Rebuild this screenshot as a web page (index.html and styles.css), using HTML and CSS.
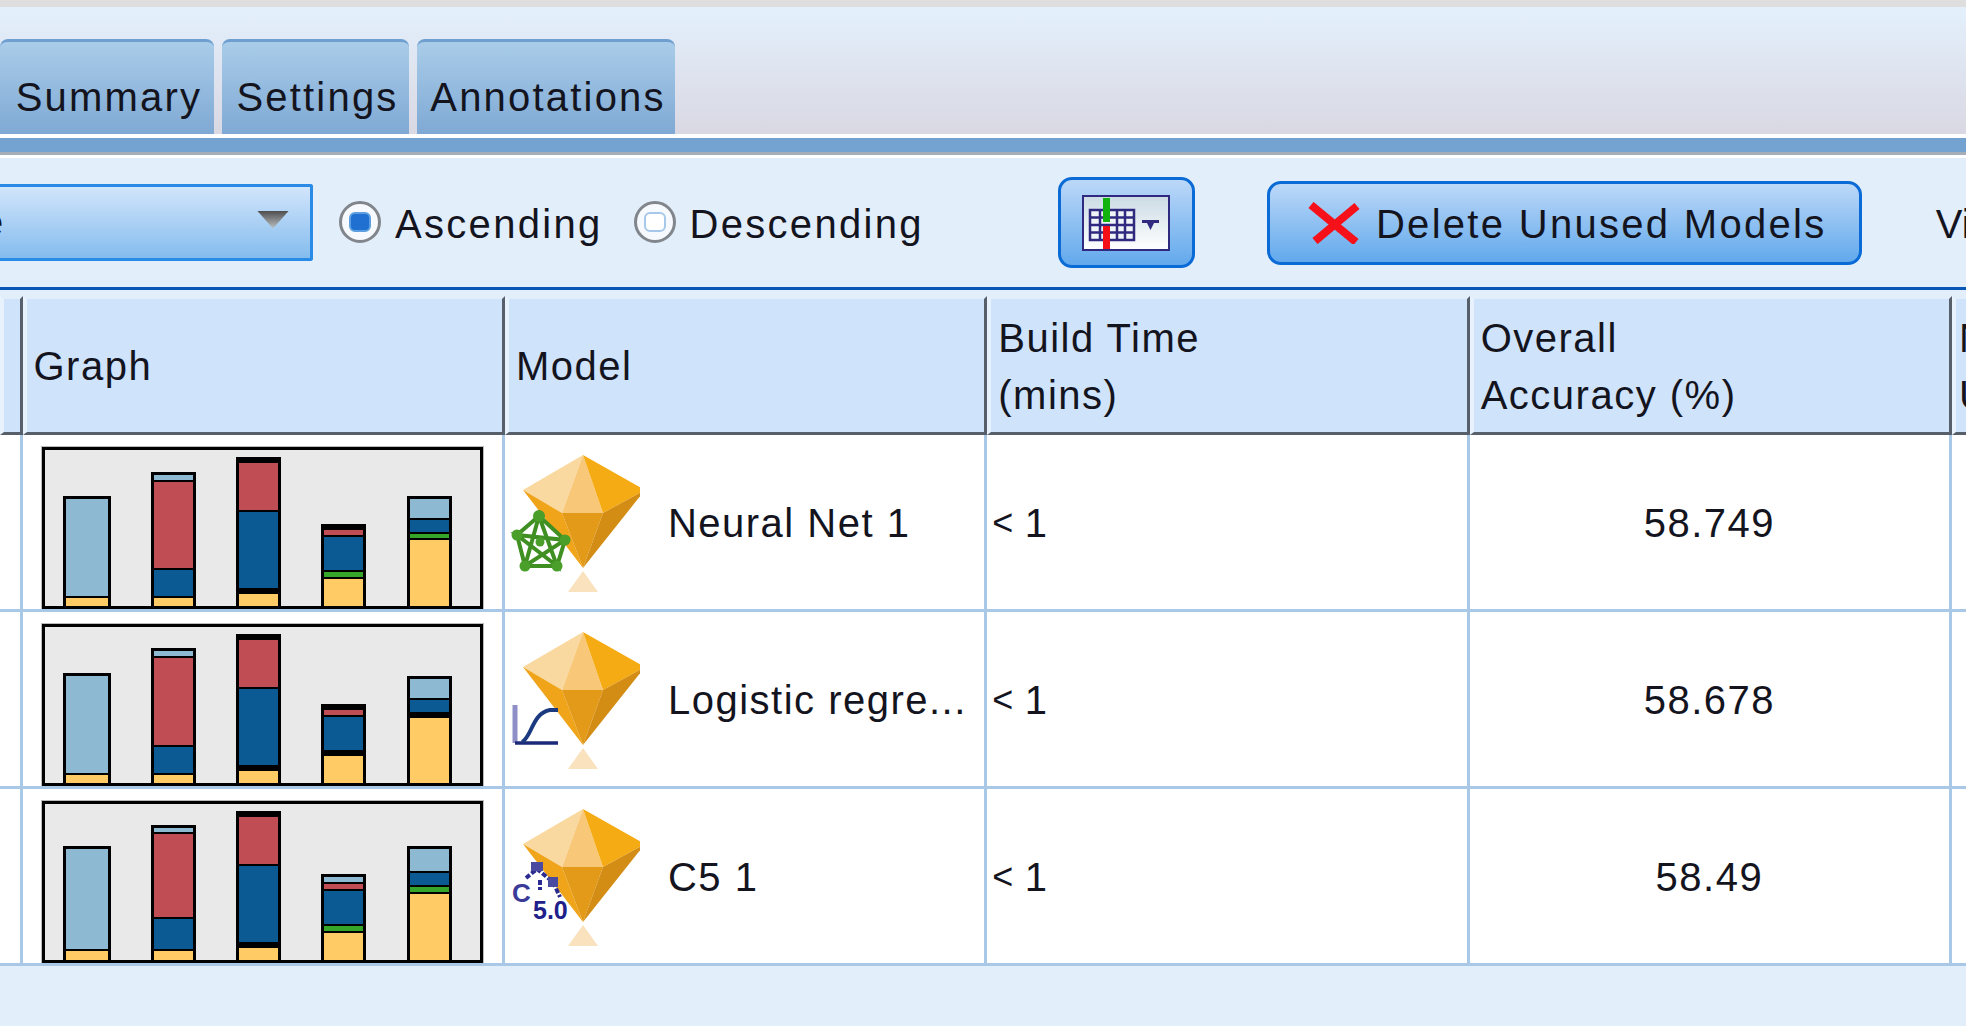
FILE: index.html
```html
<!DOCTYPE html>
<html lang="en">
<head>
  <meta charset="UTF-8" />
  <title>Model nugget</title>
  <link rel="stylesheet" href="styles.css">
</head>
<body>
  <svg class="defs" width="0" height="0">
    <symbol id="gem" viewBox="0 0 200 200" overflow="visible">
      <polygon points="93,27 33,62 72,85" fill="#f9d9a0"/>
      <polygon points="93,27 72,85 113,85" fill="#f8c878"/>
      <polygon points="93,27 113,85 155,62" fill="#f5ab14"/>
      <polygon points="33,62 72,85 93,140" fill="#f0a41a"/>
      <polygon points="72,85 113,85 93,140" fill="#e39a18"/>
      <polygon points="113,85 155,62 93,140" fill="#d48d14"/>
      <polygon points="93,143 78,164 108,164" fill="#f9e2bd"/>
    </symbol>
  </svg>

  <div class="tab-area">
    <div class="tab tab-summary">Summary</div>
    <div class="tab tab-settings">Settings</div>
    <div class="tab tab-annotations">Annotations</div>
  </div>
  <div class="band"></div>

  <div class="toolbar">
    <div class="combo">
      <span class="combo-text">e</span>
      <span class="combo-arrow"></span>
    </div>
    <label class="radio radio-asc"><span class="radio-dot on"></span><span class="radio-text">Ascending</span></label>
    <label class="radio radio-desc"><span class="radio-dot"></span><span class="radio-text">Descending</span></label>
    <div class="btn btn-table">
      <svg width="88" height="56" viewBox="0 0 88 56">
        <defs>
          <linearGradient id="tbl" x1="0" y1="0" x2="0" y2="1">
            <stop offset="0" stop-color="#cbdbe4"/>
            <stop offset="1" stop-color="#ffffff"/>
          </linearGradient>
        </defs>
        <rect x="1" y="1" width="86" height="54" fill="url(#tbl)" stroke="#2f2a7f" stroke-width="2"/>
        <rect x="8" y="15" width="44" height="30" fill="#f0f4f8" stroke="#2f2a7f" stroke-width="2.500"/>
        <path d="M8 22.500H52M8 30H52M8 37.500H52M18 15V45M35 15V45M43 15V45" stroke="#2f2a7f" stroke-width="2.500"/>
        <rect x="21" y="3" width="7" height="24" fill="#12b30e"/>
        <rect x="21" y="31" width="7" height="23" fill="#f40f17"/>
        <path d="M60 25H77V28H72L68.500 35L65 28H60Z" fill="#2f2a7f"/>
      </svg>
    </div>
    <div class="btn btn-delete">
      <svg width="54" height="42" viewBox="0 0 54 42">
        <path d="M3 3L48 40M49 4L7 39" stroke="#f5101a" stroke-width="8" fill="none"/>
      </svg>
      <span class="btn-text">Delete Unused Models</span>
    </div>
    <span class="view-label">View:</span>
  </div>
  <div class="table-line"></div>

  <div class="grid">
    <div class="th"></div>
    <div class="th">Graph</div>
    <div class="th">Model</div>
    <div class="th">Build Time<br>(mins)</div>
    <div class="th">Overall<br>Accuracy (%)</div>
    <div class="th th-last">No. Fields<br>Used</div>

    <!-- row 1 -->
    <div class="td"></div>
    <div class="td td-graph">
      <div class="chart">
        <div class="bar bar-wide"><i class="lb" style="height:97px"></i><i class="ye" style="height:8px"></i></div>
        <div class="bar"><i class="lb" style="height:5px"></i><i class="re" style="height:86px"></i><i class="bl" style="height:26px"></i><i class="ye" style="height:8px"></i></div>
        <div class="bar"><i style="height:1px"></i><i class="re" style="height:47px"></i><i class="bl" style="height:76px"></i><i style="height:2px"></i><i class="ye" style="height:12px"></i></div>
        <div class="bar"><i style="height:1px"></i><i class="re" style="height:5px"></i><i class="bl" style="height:33px"></i><i class="gr" style="height:5px"></i><i class="ye" style="height:27px"></i></div>
        <div class="bar"><i class="lb" style="height:19px"></i><i class="bl" style="height:12px"></i><i class="gr" style="height:4px"></i><i class="ye" style="height:66px"></i></div>
      </div>
    </div>
    <div class="td td-model">
      <svg class="model-icon" width="135" height="150" viewBox="15 19 135 150">
        <use href="#gem" width="200" height="200"/>
        <path d="M49 88L35 138L75 112L27 107L67 138Z M49 88L27 107L35 138H67L75 112Z" fill="#fff" fill-opacity=".7" fill-rule="evenodd" stroke="#3f8f22" stroke-width="4"/>
        <g fill="#4a9e2a"><circle cx="49" cy="88" r="6"/><circle cx="27" cy="107" r="5.500"/><circle cx="75" cy="112" r="5.500"/><circle cx="35" cy="138" r="5.500"/><circle cx="67" cy="138" r="5.500"/><circle cx="50" cy="114" r="4.500"/></g>
      </svg>
      <span class="model-name">Neural Net 1</span>
    </div>
    <div class="td td-time"><small>&lt;</small> 1</div>
    <div class="td td-num">58.749</div>
    <div class="td td-last"></div>

    <!-- row 2 -->
    <div class="td"></div>
    <div class="td td-graph">
      <div class="chart">
        <div class="bar bar-wide"><i class="lb" style="height:97px"></i><i class="ye" style="height:8px"></i></div>
        <div class="bar"><i class="lb" style="height:5px"></i><i class="re" style="height:87px"></i><i class="bl" style="height:26px"></i><i class="ye" style="height:8px"></i></div>
        <div class="bar"><i style="height:1px"></i><i class="re" style="height:47px"></i><i class="bl" style="height:76px"></i><i style="height:2px"></i><i class="ye" style="height:12px"></i></div>
        <div class="bar"><i style="height:1px"></i><i class="re" style="height:5px"></i><i class="bl" style="height:33px"></i><i style="height:2px"></i><i class="ye" style="height:27px"></i></div>
        <div class="bar"><i class="lb" style="height:19px"></i><i class="bl" style="height:12px"></i><i style="height:2px"></i><i class="ye" style="height:65px"></i></div>
      </div>
    </div>
    <div class="td td-model">
      <svg class="model-icon" width="135" height="150" viewBox="15 19 135 150">
        <use href="#gem" width="200" height="200"/>
        <path d="M25 100V138" stroke="#8f8fc8" stroke-width="5"/>
        <path d="M25 138H68" stroke="#1b2a78" stroke-width="3.500"/>
        <path d="M32 137C42 132 42 108 60 105H68" stroke="#1b3a80" stroke-width="4" fill="none"/>
      </svg>
      <span class="model-name">Logistic regre...</span>
    </div>
    <div class="td td-time"><small>&lt;</small> 1</div>
    <div class="td td-num">58.678</div>
    <div class="td td-last"></div>

    <!-- row 3 -->
    <div class="td"></div>
    <div class="td td-graph">
      <div class="chart">
        <div class="bar bar-wide"><i class="lb" style="height:100px"></i><i class="ye" style="height:9px"></i></div>
        <div class="bar"><i class="lb" style="height:4px"></i><i class="re" style="height:83px"></i><i class="bl" style="height:30px"></i><i class="ye" style="height:9px"></i></div>
        <div class="bar"><i style="height:1px"></i><i class="re" style="height:47px"></i><i class="bl" style="height:76px"></i><i style="height:2px"></i><i class="ye" style="height:12px"></i></div>
        <div class="bar"><i class="lb" style="height:5px"></i><i class="re" style="height:5px"></i><i class="bl" style="height:33px"></i><i class="gr" style="height:5px"></i><i class="ye" style="height:27px"></i></div>
        <div class="bar"><i class="lb" style="height:22px"></i><i class="bl" style="height:12px"></i><i class="gr" style="height:5px"></i><i class="ye" style="height:66px"></i></div>
      </div>
    </div>
    <div class="td td-model">
      <svg class="model-icon" width="135" height="150" viewBox="15 19 135 150">
        <use href="#gem" width="200" height="200"/>
        <path d="M36 96L47 87L63 100L70 115M50 98V108" stroke="#2a2a90" stroke-width="4" stroke-dasharray="5 2" fill="none"/>
        <rect x="41" y="80" width="12" height="9" fill="#4a4aa0"/>
        <rect x="58" y="95" width="10" height="10" fill="#4a4aa0"/>
        <text class="tree-c" x="22" y="120">C</text>
        <text class="tree-v" x="43" y="137">5.0</text>
      </svg>
      <span class="model-name">C5 1</span>
    </div>
    <div class="td td-time"><small>&lt;</small> 1</div>
    <div class="td td-num">58.49</div>
    <div class="td td-last"></div>
  </div>
</body>
</html>
```

FILE: styles.css
```css
body {
  margin: 0;
  width: 1966px;
  height: 1026px;
  overflow: hidden;
  background: #e3eefb;
  font-family: "Liberation Sans", Arial, sans-serif;
  font-size: 40px;
  letter-spacing: 1.5px;
  color: #14141e;
}

.defs {
  position: absolute;
}

/* tabs */
.tab-area {
  height: 127px;
  border-top: 7px solid #dedede;
  background: linear-gradient(#e3f0fc, #d9d8e3);
  display: flex;
  align-items: flex-end;
  gap: 8px;
}

.tab {
  height: 95px;
  box-sizing: border-box;
  padding: 18px 0 0 4px;
  border-top: 3px solid #6f9fd0;
  border-radius: 8px 8px 0 0;
  background: linear-gradient(#a9cce9, #7fa9d4);
  display: flex;
  align-items: center;
  justify-content: center;
  letter-spacing: 2.200px;
  white-space: nowrap;
}

.tab-summary { width: 214px; }
.tab-settings { width: 187px; }
.tab-annotations { width: 258px; }

.band {
  height: 14px;
  border-top: 4px solid #fff;
  border-bottom: 3px solid #a4adb8;
  background: #74a3d2;
}

/* toolbar */
.toolbar {
  height: 132px;
  border-top: 3px solid #fff;
  box-sizing: border-box;
  display: flex;
  align-items: center;
  letter-spacing: 2.300px;
  white-space: nowrap;
}

.combo {
  width: 313px;
  height: 77px;
  box-sizing: border-box;
  flex-shrink: 0;
  border: 3px solid #2a8be6;
  border-left: 0;
  border-radius: 0 3px 3px 0;
  background: linear-gradient(#d2e5fb, #84bcee);
  display: flex;
  align-items: center;
  justify-content: space-between;
  padding-right: 21px;
  overflow: hidden;
}

.combo-text {
  margin-left: -19px;
}

.combo-arrow {
  width: 32px;
  height: 18px;
  margin-top: -6px;
  background: linear-gradient(#4e4e4e, #c0c4c8);
  clip-path: polygon(0 0, 100% 0, 50% 100%);
}

.radio {
  display: flex;
  align-items: center;
  gap: 14px;
}

.radio-text,
.btn-text {
  padding-top: 3px;
}

.radio-asc { margin-left: 26px; }
.radio-desc { margin-left: 31px; }

.radio-dot {
  width: 36px;
  height: 36px;
  flex-shrink: 0;
  border: 3px solid #80868c;
  border-radius: 50%;
  background: #f6f9fd;
  display: flex;
  align-items: center;
  justify-content: center;
  margin-top: -2px;
}

.radio-dot::after {
  content: "";
  width: 18px;
  height: 16px;
  border: 2px solid #a6c8ea;
  border-radius: 6px;
  background: #fff;
}

.radio-dot.on::after {
  background: #1f70d0;
  border-color: #5c9fe0;
}

.btn {
  box-sizing: border-box;
  flex-shrink: 0;
  border: 3px solid #0a6ad6;
  border-radius: 14px;
  background: linear-gradient(#bcd8f8, #62a9ec);
  display: flex;
  align-items: center;
  justify-content: center;
}

.btn-table {
  width: 137px;
  height: 91px;
  margin-left: 134px;
}

.btn-delete {
  width: 595px;
  height: 84px;
  margin-left: 72px;
  padding-left: 6px;
  gap: 14px;
}

.view-label {
  margin-left: 74px;
  padding-top: 3px;
  letter-spacing: 0;
}

.table-line {
  height: 9px;
  border-top: 3px solid #0a55b8;
  box-sizing: border-box;
  background: #e3eefb;
}

/* results table */
.grid {
  display: grid;
  grid-template-columns: 22.500px repeat(4, 482.400px) 1fr;
  grid-template-rows: 139px 177px 177px 177px;
}

.th {
  box-sizing: border-box;
  background: #cfe3fb;
  border-top: 3px solid #e3eefb;
  border-left: 4px solid #e8f2fd;
  border-right: 3px solid #565f6a;
  border-bottom: 3px solid #565f6a;
  padding: 2px 0 0 7px;
  display: flex;
  align-items: center;
  line-height: 57px;
  overflow: hidden;
  white-space: nowrap;
}

.th-last {
  border-right: 0;
  padding-left: 3px;
}

.td {
  box-sizing: border-box;
  background: #fff;
  border-right: 3px solid #a9c8e8;
  border-bottom: 3px solid #a9c8e8;
  display: flex;
  align-items: center;
  overflow: hidden;
  white-space: nowrap;
}

.td-last {
  border-right: 0;
}

.td-graph {
  align-items: flex-end;
  justify-content: center;
}

.td-model {
  gap: 28px;
}

.model-icon {
  flex-shrink: 0;
}

.model-name {
  padding-top: 2px;
}

.td-time {
  padding: 2px 0 0 5px;
}

.td-time small {
  font-size: 36px;
  margin-right: 10px;
}

.td-num {
  justify-content: center;
  padding-top: 2px;
}

.tree-c {
  font-size: 26px;
  font-weight: bold;
  letter-spacing: 0;
  fill: #3a3a98;
}

.tree-v {
  font-size: 25px;
  font-weight: bold;
  letter-spacing: 0;
  fill: #20208a;
}

/* stacked bars */
.chart {
  width: 441px;
  height: 162px;
  box-sizing: border-box;
  border: 3px solid #000;
  background: #e9e9e9;
  outline: 1px solid #bbb;
  padding: 0 28px 0 18px;
  display: flex;
  align-items: flex-end;
  justify-content: space-between;
}

.bar {
  width: 45px;
  box-sizing: border-box;
  border: 3px solid #000;
  border-bottom: 0;
  background: #000;
  display: flex;
  flex-direction: column;
  gap: 2px;
}

.bar-wide {
  width: 48px;
}

.bar i {
  display: block;
}

.lb { background: #8eb9d2; }
.re { background: #bf4d53; }
.bl { background: #0b5a94; }
.gr { background: #35a62a; }
.ye { background: #ffcb65; }
```
